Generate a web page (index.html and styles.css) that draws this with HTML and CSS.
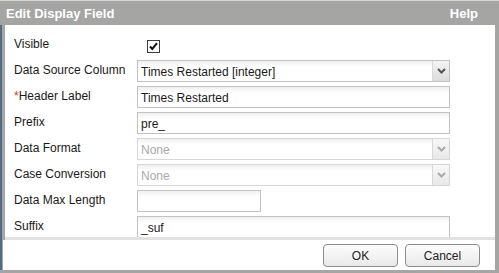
FILE: index.html
```html
<!DOCTYPE html>
<html lang="en">
<head>
    <meta charset="UTF-8">
    <title>Edit Display Field</title>
    <link rel="stylesheet" href="styles.css">
</head>
<body>
    <div class="dialog">
        <div class="topline"></div>
        <div class="titlebar">
            <span class="title">Edit Display Field</span>
            <span class="help">Help</span>
        </div>
        <div class="frame">
            <div class="content">
                <div class="row">
                    <label>Visible</label>
                    <span class="check">
                        <svg width="13" height="13" viewBox="0 0 13 13">
                            <rect x="0.5" y="0.5" width="12" height="12" fill="#fff" stroke="#3c3c3c"/>
                            <path d="M3 6.5 L5.3 9 L10 3.2" fill="none" stroke="#111" stroke-width="2"/>
                        </svg>
                    </span>
                </div>
                <div class="row">
                    <label>Data Source Column</label>
                    <div class="field select">
                        <span class="value">Times Restarted [integer]</span>
                        <span class="arrow"><svg width="9" height="6" viewBox="0 0 9 6"><path d="M1 1 L4.5 4.5 L8 1" fill="none" stroke="#555" stroke-width="2"/></svg></span>
                    </div>
                </div>
                <div class="row">
                    <label><span class="req">*</span>Header Label</label>
                    <div class="field"><span class="value">Times Restarted</span></div>
                </div>
                <div class="row">
                    <label>Prefix</label>
                    <div class="field"><span class="value">pre_</span></div>
                </div>
                <div class="row">
                    <label>Data Format</label>
                    <div class="field select disabled">
                        <span class="value">None</span>
                        <span class="arrow"><svg width="9" height="6" viewBox="0 0 9 6"><path d="M1 1 L4.5 4.5 L8 1" fill="none" stroke="#aaa" stroke-width="2"/></svg></span>
                    </div>
                </div>
                <div class="row">
                    <label>Case Conversion</label>
                    <div class="field select disabled">
                        <span class="value">None</span>
                        <span class="arrow"><svg width="9" height="6" viewBox="0 0 9 6"><path d="M1 1 L4.5 4.5 L8 1" fill="none" stroke="#aaa" stroke-width="2"/></svg></span>
                    </div>
                </div>
                <div class="row">
                    <label>Data Max Length</label>
                    <div class="field short"><span class="value"></span></div>
                </div>
                <div class="row">
                    <label>Suffix</label>
                    <div class="field"><span class="value">_suf</span></div>
                </div>
            </div>
            <div class="sep"></div>
            <div class="footer">
                <button class="btn">OK</button>
                <button class="btn">Cancel</button>
            </div>
        </div>
    </div>
</body>
</html>
```

FILE: styles.css
```css
*{
    padding: 0;
    margin: 0;
    box-sizing: border-box;
}
body{
    width: 499px;
    height: 273px;
    overflow: hidden;
    background-color: #a5a5a4;
    font-family: 'Liberation Sans', Arial, sans-serif;
}
.dialog{
    width: 499px;
    height: 273px;
    display: flex;
    flex-direction: column;
    background-color: #a5a5a4;
}
.topline{
    height: 1px;
    background-color: #d6d6d6;
}
.titlebar{
    height: 24px;
    display: flex;
    justify-content: space-between;
    align-items: center;
    padding: 0 21px 0 6px;
    color: white;
    font-weight: bold;
    font-size: 13px;
}
.frame{
    flex: 1;
    display: flex;
    flex-direction: column;
    margin: 0 4px 3px 0;
    border-left: 2px solid #556a84;
    padding-left: 3px;
}
.content{
    height: 212px;
    overflow: hidden;
    background-color: white;
    padding: 9px 0 0 9px;
    display: flex;
    flex-direction: column;
    gap: 4px;
}
.row{
    height: 22px;
    display: flex;
    align-items: center;
    flex-shrink: 0;
}
.row label{
    width: 123px;
    font-size: 12px;
    color: #1a1a1a;
    padding-bottom: 2px;
}
.req{
    color: #d83a14;
}
.check{
    margin-left: 10px;
    height: 13px;
}
.field{
    width: 313px;
    height: 22px;
    border: 1px solid #c2c2c2;
    background: linear-gradient(#f0f0f0, #fff 6px);
    display: flex;
    align-items: center;
    font-size: 12px;
    color: #1a1a1a;
}
.field .value{
    flex: 1;
    padding: 2px 0 0 3px;
}
.field.short{
    width: 124px;
}
.disabled{
    border-color: #d6d6d6;
}
.disabled .value{
    color: #a9a9a9;
}
.arrow{
    width: 17px;
    height: 20px;
    border-left: 1px solid #d8d8d8;
    background: linear-gradient(#f4f4f4, #dcdcdc);
    display: flex;
    justify-content: center;
    align-items: center;
}
.disabled .arrow{
    background: linear-gradient(#f8f8f8, #e8e8e8);
}
.sep{
    height: 3px;
    background-color: #e2e2e2;
}
.footer{
    flex: 1;
    background-color: white;
    margin-left: -2px;
    display: flex;
    justify-content: flex-end;
    align-items: center;
    gap: 7px;
    padding: 1px 15px 0 0;
}
.btn{
    width: 75px;
    height: 23px;
    border: 1px solid #8c8c8c;
    border-radius: 4px;
    background: linear-gradient(#fdfdfd, #e9e9e9);
    font-family: 'Liberation Sans', Arial, sans-serif;
    font-size: 12px;
    color: #222;
}
```
